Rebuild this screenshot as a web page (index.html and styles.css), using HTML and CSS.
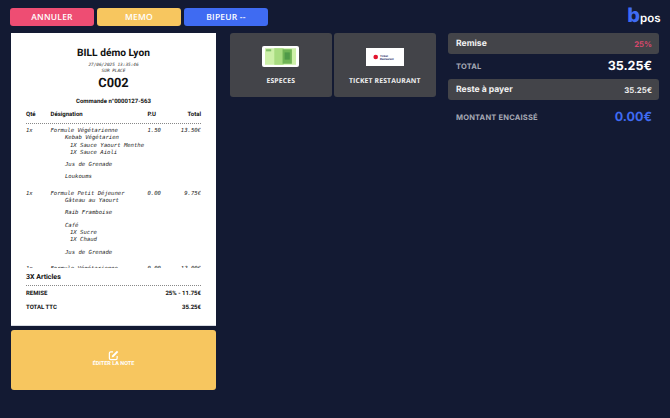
FILE: index.html
```html
<!DOCTYPE html>
<html lang="fr">
<head>
<meta charset="utf-8">
<title>bpos</title>
<link rel="stylesheet" href="styles.css">
</head>
<body>
<div class="app">
  <div class="left">
    <div class="actions">
      <div class="action red">ANNULER</div>
      <div class="action yellow">MEMO</div>
      <div class="action blue">BIPEUR --</div>
    </div>
    <div class="receipt">
      <div class="r-head">
        <div class="r-title">BILL démo Lyon</div>
        <div class="r-date">27/06/2025 13:35:46</div>
        <div class="r-date">SUR PLACE</div>
        <div class="r-code">C002</div>
        <div class="r-order">Commande n°0000127-563</div>
        <div class="r-cols">
          <span class="c-q">Qté</span><span class="c-d">Désignation</span><span class="c-p">P.U</span><span class="c-t">Total</span>
        </div>
      </div>
      <div class="r-lines">
        <div class="line"><span class="c-q">1x</span><span class="c-d">Formule Végétarienne</span><span class="c-p">1.50</span><span class="c-t">13.50€</span></div>
        <div class="sub">Kebab Végétarien</div>
        <div class="opt">1X Sauce Yaourt Menthe</div>
        <div class="opt">1X Sauce Aioli</div>
        <div class="sub gap">Jus de Grenade</div>
        <div class="sub gap">Loukoums</div>
        <div class="line next"><span class="c-q">1x</span><span class="c-d">Formule Petit Déjeuner</span><span class="c-p">0.00</span><span class="c-t">9.75€</span></div>
        <div class="sub">Gâteau au Yaourt</div>
        <div class="sub gap">Raib Framboise</div>
        <div class="sub gap">Café</div>
        <div class="opt">1X Sucre</div>
        <div class="opt">1X Chaud</div>
        <div class="sub gap">Jus de Grenade</div>
        <div class="line next"><span class="c-q">1x</span><span class="c-d">Formule Végétarienne</span><span class="c-p">0.00</span><span class="c-t">12.00€</span></div>
      </div>
      <div class="r-foot">
        <div class="r-count">3X Articles</div>
        <div class="r-row first"><span>REMISE</span><span>25% - 11.75€</span></div>
        <div class="r-row"><span>TOTAL TTC</span><span>35.25€</span></div>
      </div>
    </div>
    <div class="note">
      <svg class="note-icon" viewBox="0 0 24 24" aria-hidden="true"><path d="M11 4H6a3 3 0 0 0-3 3v11a3 3 0 0 0 3 3h11a3 3 0 0 0 3-3v-5" fill="none" stroke="#fff" stroke-width="2.6"/><path d="M19.5 1.5l3 3L12 15l-4 1 1-4z" fill="#fff"/></svg>
      <div class="note-label">ÉDITER LA NOTE</div>
    </div>
  </div>
  <div class="pay">
    <div class="tile">
      <div class="thumb">
        <svg viewBox="0 0 30 16" class="thumb-art" aria-hidden="true"><rect width="30" height="16" fill="#cdf0a8"/><rect x="9" width="9" height="16" fill="#a8dc80"/><rect x="17" y="1" width="9" height="14" fill="#6fb455"/><rect x="19" y="4" width="5" height="7" fill="#4f9a48"/><rect x="1" y="1" width="5" height="2" fill="#7fbc66"/></svg>
      </div>
      <div class="tile-label">ESPECES</div>
    </div>
    <div class="tile">
      <div class="thumb plain">
        <svg viewBox="0 0 38 18" class="thumb-art" aria-hidden="true"><rect width="38" height="18" fill="#fff"/><circle cx="9.7" cy="9" r="2.3" fill="#e2142d"/><text x="14" y="8.5" class="tr-text">Ticket</text><text x="14" y="11.8" class="tr-text">Restaurant</text></svg>
      </div>
      <div class="tile-label">TICKET RESTAURANT</div>
    </div>
  </div>
  <div class="summary">
    <div class="logo"><span class="logo-b">b</span><span class="logo-pos">pos</span></div>
    <div class="band"><span class="band-l">Remise</span><span class="band-v pink">25%</span></div>
    <div class="plain-row"><span class="plain-l">TOTAL</span><span class="plain-v">35.25€</span></div>
    <div class="band"><span class="band-l">Reste à payer</span><span class="band-v">35.25€</span></div>
    <div class="plain-row paid"><span class="plain-l">MONTANT ENCAISSÉ</span><span class="plain-v bluev">0.00€</span></div>
  </div>
</div>
</body>
</html>
```
FILE: styles.css
```css
* { box-sizing: border-box; }
html, body { margin: 0; height: 100%; }
body { background: #131a33; overflow: hidden; font-family: "Open Sans", sans-serif; text-rendering: geometricPrecision; }
.app { display: flex; align-items: flex-start; width: 670px; height: 418px; padding: 8px 11px 0 10px; }
.left { width: 258px; flex: none; display: flex; flex-direction: column; }
.actions { display: flex; gap: 3px; height: 18px; }
.action { width: 84px; border-radius: 3px; color: #fff; font-size: 8.5px; font-weight: 600; letter-spacing: .2px; display: flex; align-items: center; justify-content: center; }
.red { background: #ee4d73; }
.yellow { background: #f7c65f; }
.blue { background: #3f6bf2; }
.receipt { width: 205px; height: 293px; margin: 7px 0 0 1px; background: #fff; display: flex; flex-direction: column; padding: 14px 15px 0; color: #111; font-family: Roboto, sans-serif; border-bottom: 1px solid #d8dbe2; }
.r-title { text-align: center; font-size: 10.2px; font-weight: 700; line-height: 13px; }
.r-date { text-align: center; font-family: "DejaVu Sans Mono", monospace; font-style: italic; font-size: 4.4px; line-height: 6px; color: #333; }
.r-date:nth-child(2) { margin-top: 3px; }
.r-code { text-align: center; font-size: 12.8px; font-weight: 700; line-height: 18px; }
.r-order { text-align: center; font-size: 6px; font-weight: 700; line-height: 8px; margin-top: 5px; }
.r-cols { display: flex; font-size: 6px; font-weight: 700; line-height: 7px; margin-top: 5px; padding-bottom: 5px; border-bottom: 1px dotted #888; }
.c-q { width: 24.5px; flex: none; }
.c-d { width: 97px; flex: none; }
.c-p { width: 20px; flex: none; }
.c-t { flex: 1; text-align: right; }
.r-lines { height: 144px; overflow: hidden; padding-top: 4px; font-family: "DejaVu Sans Mono", monospace; font-style: italic; font-size: 5.6px; line-height: 7.3px; color: #222; flex: none; }
.line { display: flex; }
.next { margin-top: 9px; }
.sub { padding-left: 39px; }
.opt { padding-left: 44px; }
.gap { margin-top: 5px; }
.r-count { font-size: 7px; font-weight: 700; line-height: 9px; margin-top: 4.5px; padding-bottom: 3px; border-bottom: 1px dotted #888; }
.r-row { display: flex; justify-content: space-between; font-size: 6px; font-weight: 700; line-height: 7px; margin-top: 7px; }
.r-row.first { margin-top: 4px; }
.note { width: 205px; height: 60px; margin: 4px 0 0 1px; background: #f7c65f; border-radius: 3px; display: flex; flex-direction: column; align-items: center; justify-content: center; color: #fff; padding-bottom: 2px; }
.note-icon { width: 11px; height: 11px; }
.note-label { font-family: Roboto, sans-serif; font-size: 5.5px; font-weight: 700; line-height: 7px; margin-top: 0; }
.pay { display: flex; gap: 2.5px; width: 206px; margin: 25px 0 0 -38px; flex: none; }
.tile { width: 101.5px; height: 64px; background: #434449; border-radius: 3px; display: flex; flex-direction: column; align-items: center; padding-top: 13px; }
.thumb { width: 37px; height: 21px; background: #fff; border-radius: 2px; padding: 2px 3px; display: flex; }
.thumb.plain { padding: 0; border-radius: 0; height: 18px; margin-top: 2px; margin-bottom: 1px; width: 38px; }
.thumb-art { width: 100%; height: 100%; display: block; }
.tr-text { font-family: Roboto, sans-serif; font-size: 2.8px; font-weight: 700; fill: #23265f; }
.tile-label { color: #f1f1f1; font-size: 6.8px; font-weight: 700; line-height: 8px; margin-top: 10px; letter-spacing: .15px; }
.summary { width: 211px; margin-left: 12px; flex: none; display: flex; flex-direction: column; font-family: Inter, sans-serif; }
.logo { height: 25px; display: flex; justify-content: flex-end; align-items: baseline; margin: 0 -1.5px 0 0; line-height: 1; }
.logo-b { color: #3f6bf2; font-size: 20px; font-weight: 800; line-height: 14px; }
.logo-pos { color: #fff; font-size: 11.5px; font-weight: 600; line-height: 12px; }
.band { height: 21px; background: #434449; border-radius: 3px; display: flex; justify-content: space-between; align-items: center; padding: 0 7px 0 8px; }
.band-l { color: #f2f2f2; font-size: 8.6px; font-weight: 700; }
.band-v { color: #eee; font-size: 7.8px; font-weight: 700; }
.pink { color: #d8486c; }
.plain-row { height: 25px; display: flex; justify-content: space-between; align-items: center; padding: 0 7px 0 8px; }
.plain-row.paid { height: 28px; margin-top: 3px; }
.plain-l { color: #a5a8b3; font-size: 7.5px; font-weight: 700; letter-spacing: .2px; }
.plain-v { color: #fff; font-size: 12.5px; font-weight: 700; }
.bluev { color: #3f6bf2; }
```
